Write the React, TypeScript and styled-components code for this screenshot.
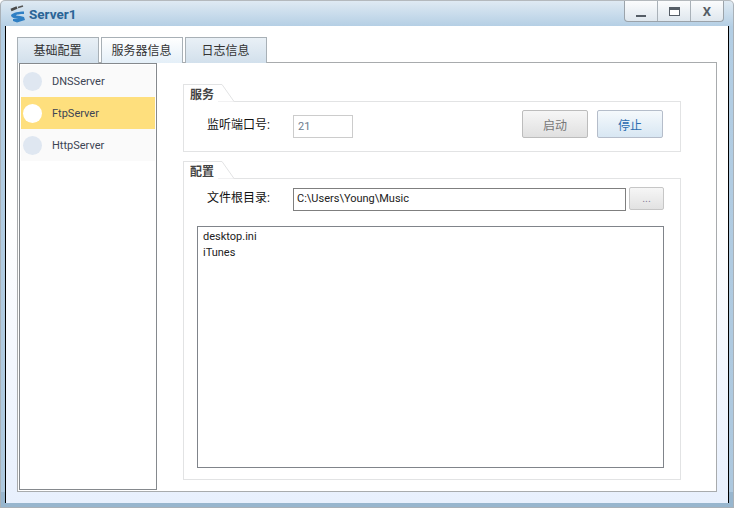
import React from 'react';
import styled, { createGlobalStyle } from 'styled-components';

const GlobalStyle = createGlobalStyle`
  html, body {
    margin: 0;
    padding: 0;
    background: #fff;
  }
  * { box-sizing: border-box; }
`;

const UI_FONT = `Tahoma, Roboto, "Noto Sans CJK SC", sans-serif`;

const Window = styled.div`
  width: 734px;
  height: 508px;
  display: flex;
  flex-direction: column;
  font-family: ${UI_FONT};
  border: 1px solid #a9b1b8;
  border-top-color: #b4b9bd;
  border-radius: 5px 5px 0 0;
  background: linear-gradient(#dfeaf3, #b3cee4 26px, #adc8de 97%, #98b6ce 97%);
  overflow: hidden;
`;

const TitleBar = styled.div`
  height: 25px;
  flex: none;
  display: flex;
  align-items: center;
  padding-left: 9px;
  gap: 3px;
`;

const Title = styled.span`
  font-size: 13.5px;
  font-weight: 700;
  color: #2a6496;
`;

const Controls = styled.div`
  margin-left: auto;
  margin-right: 9px;
  align-self: flex-start;
  display: flex;
  width: 100px;
  height: 21px;
  border: 1px solid #9ba3aa;
  border-top: none;
  border-radius: 0 0 4px 4px;
  background: linear-gradient(#fbfcfd, #dfe7ee);
`;

const ControlButton = styled.div`
  flex: 1;
  display: flex;
  align-items: center;
  justify-content: center;
  color: #555d66;
  font-size: 13px;
  font-weight: 700;
  & + & { border-left: 1px solid #a9b1b8; }
`;

const MinIcon = styled.svg`
  margin-top: 9px;
`;

const Frame = styled.div`
  flex: 1;
  margin: 0 4px 4px 4px;
  border-left: 1px solid #000;
  border-right: 1px solid #000;
  background: linear-gradient(#fff 40%, #e8f0fd 100%);
  padding: 11px;
  display: flex;
  flex-direction: column;
`;

const TabStrip = styled.div`
  display: flex;
  gap: 2px;
  height: 25px;
  flex: none;
`;

const Tab = styled.div<{ $active?: boolean }>`
  width: 82px;
  height: 26px;
  padding: 0 1px 2px 0;
  display: flex;
  align-items: center;
  justify-content: center;
  font-size: 12px;
  color: #333;
  border: 1px solid #a8b0b6;
  border-bottom: none;
  background: ${(p) =>
    p.$active
      ? 'linear-gradient(#fff, #e4eff8)'
      : 'linear-gradient(#e9f0f6, #d2e0ec)'};
  position: relative;
  z-index: ${(p) => (p.$active ? 1 : 0)};
`;

const Panel = styled.div`
  flex: 1;
  display: flex;
  border: 1px solid #a8abad;
  background: #fff;
  padding: 0 0 1px 1px;
  min-height: 0;
`;

const SideList = styled.div`
  width: 138px;
  flex: none;
  border: 1px solid #85898d;
  padding: 1px;
  background: #fff;
`;

const SideItem = styled.div<{ $selected?: boolean }>`
  height: 32px;
  display: flex;
  align-items: center;
  padding-left: 2px;
  gap: 10px;
  font-size: 11px;
  color: #3c4454;
  background: ${(p) => (p.$selected ? '#fedf7d' : '#fafafa')};
`;

const Dot = styled.span<{ $selected?: boolean }>`
  width: 19px;
  height: 19px;
  border-radius: 50%;
  background: ${(p) => (p.$selected ? '#fff' : '#dfe7f1')};
`;

const Content = styled.div`
  flex: 1;
  padding: 21px 35px 10px 26px;
  display: flex;
  flex-direction: column;
  gap: 9px;
`;

const Group = styled.div<{ $grow?: boolean }>`
  display: flex;
  flex-direction: column;
  flex: ${(p) => (p.$grow ? 1 : 'none')};
`;

const GroupHead = styled.div`
  height: 18px;
  display: flex;
  position: relative;
  margin-bottom: -1px;
  z-index: 1;
`;

const GroupTitle = styled.div`
  width: 35px;
  height: 18px;
  padding-left: 6px;
  font-size: 12px;
  font-weight: 700;
  line-height: 21px;
  color: #444;
  background: #fff;
  border: 1px solid #e2e3e4;
  border-width: 1px 0 0 1px;
`;

const GroupNotch = styled.svg`
  display: block;
`;

const GroupBody = styled.div<{ $grow?: boolean }>`
  border: 1px solid #e2e3e4;
  flex: ${(p) => (p.$grow ? 1 : 'none')};
  display: flex;
  flex-direction: column;
`;

const ServiceRow = styled.div`
  height: 49px;
  display: flex;
  align-items: flex-start;
  padding: 8px 0 0 23px;
`;

const FieldLabel = styled.span`
  width: 86px;
  flex: none;
  font-size: 12px;
  color: #111;
  line-height: 21px;
`;

const PortInput = styled.div`
  width: 60px;
  height: 23px;
  margin-top: 5px;
  border: 1px solid #ccc;
  font-size: 11px;
  color: #6d7c8c;
  line-height: 21px;
  padding-left: 4px;
`;

const PortLabel = styled(FieldLabel)`
  margin-top: 5px;
`;

const ActionButton = styled.div<{ $primary?: boolean }>`
  width: 66px;
  height: 28px;
  display: flex;
  align-items: center;
  justify-content: center;
  font-size: 12px;
  border-radius: 2px;
  border: 1px solid ${(p) => (p.$primary ? '#b5bdca' : '#bcbcbc')};
  color: ${(p) => (p.$primary ? '#2b6cb0' : '#777')};
  background: ${(p) =>
    p.$primary
      ? 'linear-gradient(#f5f9fc, #d8e7f3)'
      : 'linear-gradient(#f6f6f6, #e0e0e0)'};
`;

const ButtonGroup = styled.div`
  margin-left: auto;
  margin-right: 17px;
  display: flex;
  gap: 9px;
`;

const ConfigBody = styled.div`
  flex: 1;
  display: flex;
  flex-direction: column;
  padding: 9px 16px 11px 13px;
`;

const PathRow = styled.div`
  display: flex;
  padding-left: 10px;
  height: 24px;
  align-items: flex-start;
`;

const PathInput = styled.div`
  width: 333px;
  height: 23px;
  border: 1px solid #7f7f7f;
  font-size: 11px;
  line-height: 20px;
  padding-left: 3px;
  color: #222;
`;

const BrowseButton = styled.div`
  width: 35px;
  height: 23px;
  margin-left: 3px;
  margin-top: -1px;
  display: flex;
  align-items: center;
  justify-content: center;
  font-size: 11px;
  color: #8a7f9a;
  border: 1px solid #c6c6c6;
  border-radius: 2px;
  background: linear-gradient(#f6f6f6, #e2e2e2);
`;

const FileList = styled.div`
  flex: 1;
  margin-top: 14px;
  border: 1px solid #80848a;
  padding: 2px 5px;
  font-size: 11px;
  color: #222;
`;

const FileItem = styled.div`
  height: 16px;
  line-height: 16px;
`;

const Notch = () => (
  <GroupNotch width="20" height="18" viewBox="0 0 20 18">
    <path d="M0 .5 H4 L16 17.5 H0 Z" fill="#fff" />
    <path d="M0 .5 H4 L16 17.5 H20" fill="none" stroke="#e2e3e4" />
  </GroupNotch>
);

const Logo = () => (
  <svg width="16" height="18" viewBox="0 0 16 18">
    <path d="M1 5 L7 2.5" stroke="#4a4a4a" strokeWidth="2.6" />
    <path d="M8 2.5 L13 1" stroke="#555" strokeWidth="1.6" />
    <path
      d="M1 10 C3 7.5 9 6.5 14 6.5 L14 9 C10 9 6 9.5 6 10.5 C8 11 12 11 14 12 L15 15 L7 17.5 L3 16 L3 14 L10 14 C6 14 1 13 1 10 Z"
      fill="#2f7fc4"
    />
  </svg>
);

const App: React.FC = () => (
  <>
    <GlobalStyle />
    <Window>
      <TitleBar>
        <Logo />
        <Title>Server1</Title>
        <Controls>
          <ControlButton>
            <MinIcon width="10" height="2"><rect width="10" height="2" fill="#555d66" /></MinIcon>
          </ControlButton>
          <ControlButton>
            <svg width="11" height="9">
              <rect x=".5" y=".5" width="10" height="8" fill="#fff" stroke="#555d66" />
              <rect width="11" height="3" fill="#555d66" />
            </svg>
          </ControlButton>
          <ControlButton>X</ControlButton>
        </Controls>
      </TitleBar>
      <Frame>
        <TabStrip>
          <Tab>基础配置</Tab>
          <Tab $active>服务器信息</Tab>
          <Tab>日志信息</Tab>
        </TabStrip>
        <Panel>
          <SideList>
            <SideItem>
              <Dot />
              DNSServer
            </SideItem>
            <SideItem $selected>
              <Dot $selected />
              FtpServer
            </SideItem>
            <SideItem>
              <Dot />
              HttpServer
            </SideItem>
          </SideList>
          <Content>
            <Group>
              <GroupHead>
                <GroupTitle>服务</GroupTitle>
                <Notch />
              </GroupHead>
              <GroupBody>
                <ServiceRow>
                  <PortLabel>监听端口号:</PortLabel>
                  <PortInput>21</PortInput>
                  <ButtonGroup>
                    <ActionButton>启动</ActionButton>
                    <ActionButton $primary>停止</ActionButton>
                  </ButtonGroup>
                </ServiceRow>
              </GroupBody>
            </Group>
            <Group $grow>
              <GroupHead>
                <GroupTitle>配置</GroupTitle>
                <Notch />
              </GroupHead>
              <GroupBody $grow>
                <ConfigBody>
                  <PathRow>
                    <FieldLabel>文件根目录:</FieldLabel>
                    <PathInput>C:\Users\Young\Music</PathInput>
                    <BrowseButton>...</BrowseButton>
                  </PathRow>
                  <FileList>
                    <FileItem>desktop.ini</FileItem>
                    <FileItem>iTunes</FileItem>
                  </FileList>
                </ConfigBody>
              </GroupBody>
            </Group>
          </Content>
        </Panel>
      </Frame>
    </Window>
  </>
);

export default App;
